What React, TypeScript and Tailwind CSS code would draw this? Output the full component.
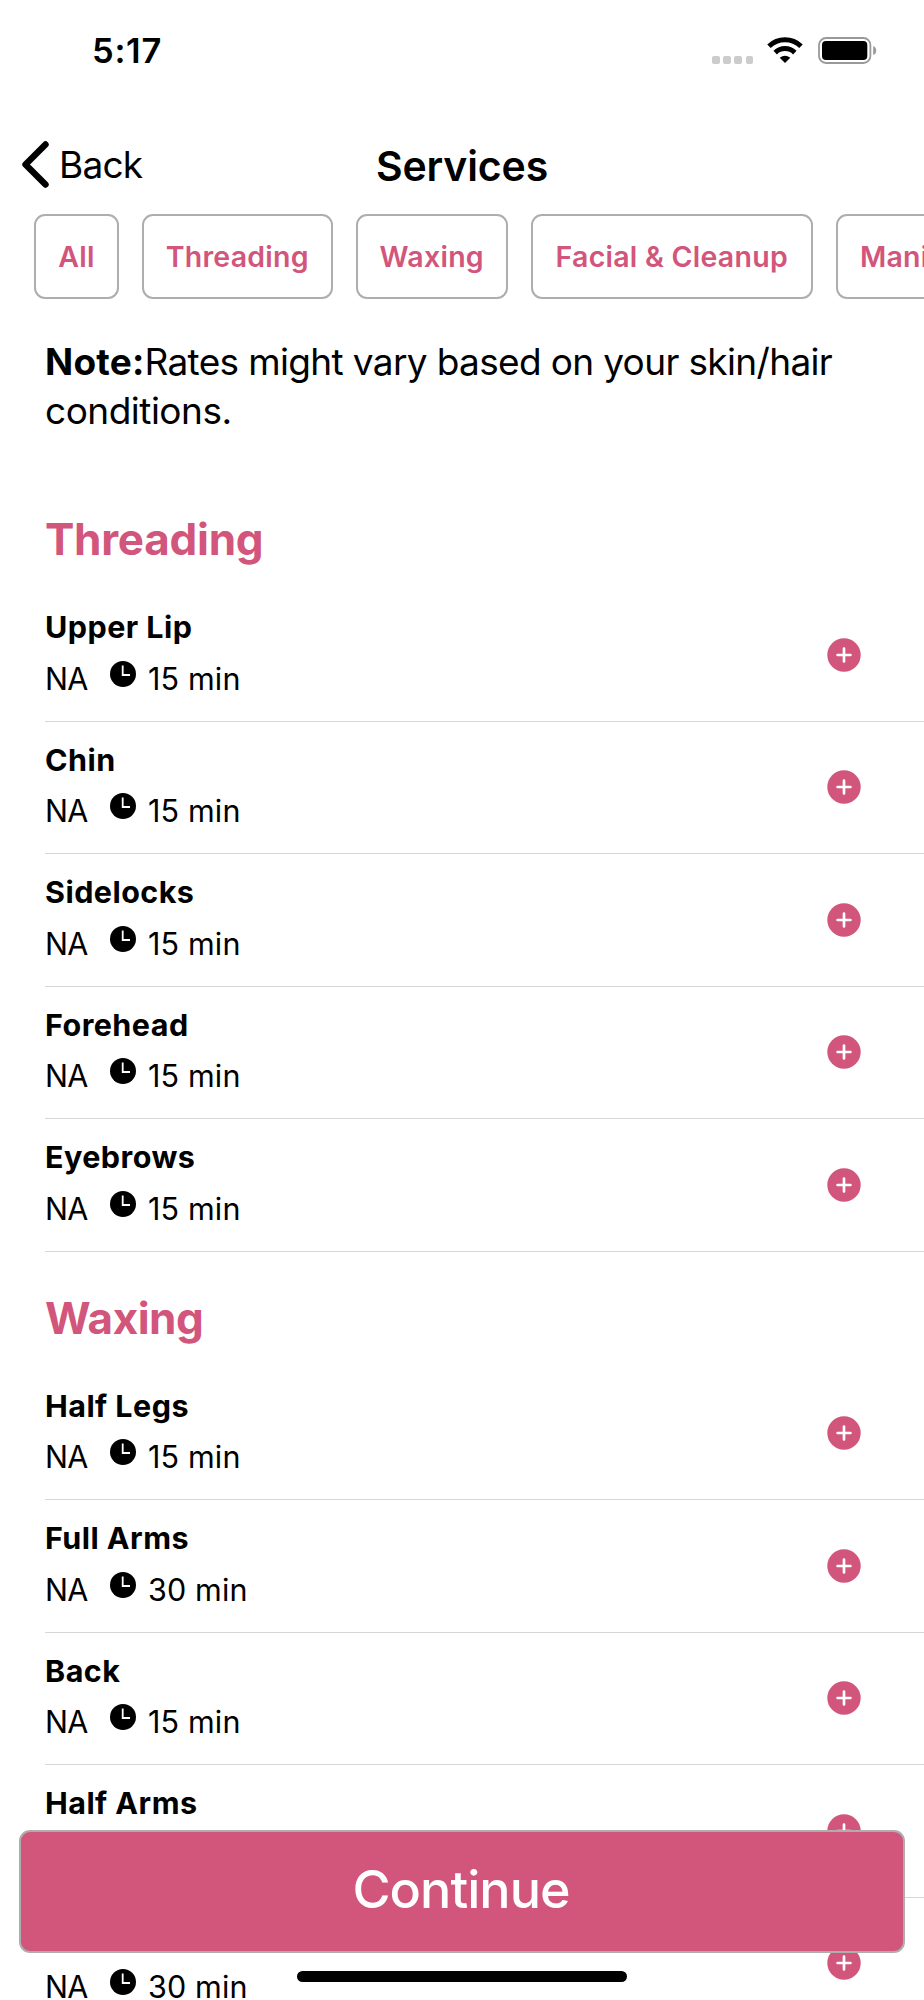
import React from 'react';

const categories = [
  { label: 'All', width: 'w-[85px]' },
  { label: 'Threading', width: 'w-[191.5px]' },
  { label: 'Waxing', width: 'w-[152.5px]' },
  { label: 'Facial & Cleanup', width: 'w-[282.5px]' },
  { label: 'Manicure', width: 'w-[180px]' },
];

const sections = [
  {
    title: 'Threading',
    titleClass: 'tracking-[-0.25px]',
    services: [
      { name: 'Upper Lip', price: 'NA', duration: '15 min' },
      { name: 'Chin', price: 'NA', duration: '15 min' },
      { name: 'Sidelocks', price: 'NA', duration: '15 min' },
      { name: 'Forehead', price: 'NA', duration: '15 min' },
      { name: 'Eyebrows', price: 'NA', duration: '15 min' },
    ],
  },
  {
    title: 'Waxing',
    titleClass: 'tracking-[-0.5px]',
    services: [
      { name: 'Half Legs', price: 'NA', duration: '15 min' },
      { name: 'Full Arms', price: 'NA', duration: '30 min' },
      { name: 'Back', price: 'NA', duration: '15 min' },
      { name: 'Half Arms', price: 'NA', duration: '15 min' },
      { name: 'Full Back', price: 'NA', duration: '30 min' },
    ],
  },
];

const WifiIcon: React.FC = () => (
  <svg width="36" height="27" viewBox="0 0 36 27" fill="none" stroke="#000">
    <path d="M2 9.2 A23 23 0 0 1 34 9.2" strokeWidth="5" />
    <path d="M8.2 15.6 A14 14 0 0 1 27.8 15.6" strokeWidth="5" />
    <path d="M18 26 L12.7 20.8 Q18 16.6 23.3 20.8 Z" fill="#000" stroke="none" />
  </svg>
);

const BatteryIcon: React.FC = () => (
  <svg width="59" height="27" viewBox="0 0 59 27">
    <rect x="1" y="1" width="51.4" height="25" rx="7" fill="none" stroke="#999" strokeWidth="1.8" />
    <rect x="4" y="4" width="45.3" height="19" rx="4" fill="#000" />
    <path d="M55.2 9 Q58.2 10 58.2 13.5 Q58.2 17 55.2 18 Z" fill="#999" />
  </svg>
);

const ClockIcon: React.FC = () => (
  <svg width="26" height="26" viewBox="0 0 26 26">
    <circle cx="13" cy="13" r="13" fill="#000" />
    <path d="M12.7 4.5 V14 H20" fill="none" stroke="#fff" strokeWidth="1.8" />
  </svg>
);

const AddIcon: React.FC = () => (
  <svg width="34" height="34" viewBox="0 0 34 34">
    <circle cx="17" cy="17" r="16.7" fill="#d2557c" />
    <path d="M17 10.6 V23.4 M10.6 17 H23.4" stroke="#fff" strokeWidth="2.7" strokeLinecap="round" />
  </svg>
);

interface ServiceRowProps {
  name: string;
  price: string;
  duration: string;
}

const ServiceRow: React.FC<ServiceRowProps> = ({ name, price, duration }) => (
  <div className="ml-[45px] flex h-[132.5px] items-start justify-between border-b border-[#d6d6d6] pr-[63px]">
    <div className="pt-[18px]">
      <div className="h-[40px] text-[30.5px] leading-[40px] font-bold tracking-[0.45px] whitespace-nowrap">{name}</div>
      <div className="mt-[11.5px] flex h-[40px] items-start text-[30.5px] leading-[40px] whitespace-nowrap">
        <span className="w-[65px] tracking-[-0.7px]">{price}</span>
        <span className="mt-[2px] mr-[12px]">
          <ClockIcon />
        </span>
        <span className="tracking-[0.15px]">{duration}</span>
      </div>
    </div>
    <button className="mt-[48.5px]" aria-label={`Add ${name}`}>
      <AddIcon />
    </button>
  </div>
);

export default function App() {
  return (
    <div className="relative h-[2000px] w-[924px] overflow-hidden bg-white font-['Inter',sans-serif] text-black">
      {/* Status bar */}
      <div className="flex h-[100px] justify-between pr-[47px] pl-[92px]">
        <div className="pt-[31px] text-[34.5px] leading-[40px] font-semibold tracking-[0.7px]">5:17</div>
        <div className="flex items-start pt-[37px]">
          <div className="mt-[19px] mr-[14px] flex gap-[3.6px]">
            {[0, 1, 2, 3].map((dot) => (
              <span key={dot} className="h-[7.5px] w-[7.5px] rounded-[2px] bg-[#ccc]" />
            ))}
          </div>
          <WifiIcon />
          <span className="ml-[15px]">
            <BatteryIcon />
          </span>
        </div>
      </div>

      {/* Navigation */}
      <header className="flex h-[114px] items-start">
        <button className="flex w-[300px] items-start pt-[40px] pl-[21px]">
          <svg width="28" height="48" viewBox="0 0 28 48">
            <path d="M24.5 4.5 L4.5 24.5 L24.5 44.5" fill="none" stroke="#000" strokeWidth="6.4" strokeLinecap="round" strokeLinejoin="round" />
          </svg>
          <span className="ml-[10px] pt-[5px] text-[37px] leading-[40px] tracking-[-0.8px]">Back</span>
        </button>
        <h1 className="w-[324px] pt-[46px] text-center text-[41px] leading-[40px] font-semibold tracking-[-0.15px]">Services</h1>
      </header>

      {/* Category filters */}
      <nav className="flex gap-[22.5px] overflow-hidden pl-[34px]">
        {categories.map((category) => (
          <button
            key={category.label}
            className={`flex h-[85px] shrink-0 items-center justify-center rounded-[11px] border-2 border-[#aeaeae] pt-[2px] text-[28.5px] font-semibold tracking-[0.25px] whitespace-nowrap text-[#d2557c] ${category.width}`}
          >
            {category.label}
          </button>
        ))}
      </nav>

      <p className="h-[174px] pt-[38px] pl-[45px] text-[37px] leading-[49px] tracking-[-0.65px]">
        <b className="tracking-[0.2px]">Note:</b>Rates might vary based on your skin/hair
        <br />
        <span className="tracking-[-0.5px]">conditions.</span>
      </p>

      {/* Services */}
      {sections.map((section) => (
        <section key={section.title}>
          <h2 className={`h-[116px] pt-[41px] pl-[45px] text-[44px] leading-[50px] font-bold text-[#d2557c] ${section.titleClass}`}>
            {section.title}
          </h2>
          {section.services.map((service) => (
            <ServiceRow key={service.name} {...service} />
          ))}
        </section>
      ))}

      {/* Footer button over the list */}
      <button className="absolute top-[1830px] left-[19px] flex h-[123px] w-[886px] items-center justify-center rounded-[11px] border-2 border-[#aeaeae] bg-[#d2557c] pr-[2px] pb-[4px] text-[52px] font-medium tracking-[-0.95px] text-white">
        Continue
      </button>
      <div className="absolute top-[1971px] left-[297px] h-[11px] w-[330px] rounded-full bg-black" />
    </div>
  );
}
